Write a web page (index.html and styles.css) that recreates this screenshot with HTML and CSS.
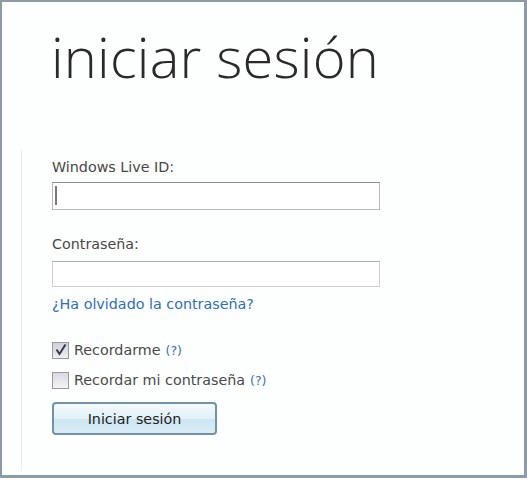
FILE: index.html
```html
<!DOCTYPE html>
<html lang="es">
<head>
<meta charset="utf-8">
<title>iniciar sesión</title>
<link rel="stylesheet" href="styles.css">
</head>
<body>
<div class="frame">
  <h1 class="title">iniciar sesión</h1>
  <form class="form">
    <label class="label">Windows Live ID:</label>
    <div class="input input-focus"><span class="caret"></span></div>
    <label class="label label-2">Contraseña:</label>
    <div class="input input-2"></div>
    <a class="link" href="#">¿Ha olvidado la contraseña?</a>
    <div class="check-row row-1">
      <span class="box checked">
        <svg viewBox="0 0 14 14" width="14" height="14"><path d="M2.5 6.5 L5.5 11 L11.5 1.5" fill="none" stroke="#3a3a48" stroke-width="2"/></svg>
      </span>
      <span class="check-text">Recordarme</span>
      <a class="help" href="#">(?)</a>
    </div>
    <div class="check-row row-2">
      <span class="box"></span>
      <span class="check-text">Recordar mi contraseña</span>
      <a class="help" href="#">(?)</a>
    </div>
    <button class="btn" type="button">Iniciar sesión</button>
  </form>
</div>
</body>
</html>
```
FILE: styles.css
```css
html, body {
  margin: 0;
  padding: 0;
  background: #ffffff;
}
.frame {
  box-sizing: border-box;
  width: 527px;
  height: 478px;
  border: 2px solid #8d9ba7;
  border-right-width: 3px;
  border-bottom-width: 3px;
  background: #fdfefe;
  display: flex;
  flex-direction: column;
}
.title {
  margin: 0;
  padding: 14px 0 0 49px;
  height: 128px;
  box-sizing: border-box;
  font-family: "Open Sans", sans-serif;
  font-weight: 300;
  font-size: 56px;
  line-height: 80px;
  color: #2a2a2a;
  letter-spacing: 0.2px;
}
.form {
  flex: 1;
  margin: 20px 0 4px 19px;
  border-left: 1px solid #ececec;
  padding: 9px 0 0 30px;
  display: flex;
  flex-direction: column;
  align-items: flex-start;
  font-family: "DejaVu Sans", sans-serif;
  font-size: 14.3px;
  color: #484848;
}
.label {
  line-height: 17px;
}
.label-2 {
  margin-top: 26px;
}
.input {
  box-sizing: border-box;
  width: 328px;
  height: 28px;
  margin-top: 6px;
  border: 1px solid #b9b9b9;
  border-top-color: #8e8e8e;
  background: #fff;
  padding: 3px 0 0 2px;
}
.input-2 {
  height: 26px;
  margin-top: 8px;
  border-color: #cfcfcf;
  border-top-color: #a9a9a9;
}
.caret {
  display: block;
  width: 2px;
  height: 19px;
  background: #7a7a7a;
}
.link {
  margin-top: 8px;
  color: #2f6fb9;
  text-decoration: none;
  line-height: 18px;
}
.check-row {
  display: flex;
  align-items: center;
  gap: 5px;
  height: 20px;
}
.row-1 {
  margin-top: 27px;
}
.row-2 {
  margin-top: 10px;
}
.box {
  box-sizing: border-box;
  width: 17px;
  height: 17px;
  border: 1px solid #9a9a9a;
  background: linear-gradient(#d9d9e2, #f4f4f6);
  display: flex;
  align-items: center;
  justify-content: center;
}
.box.checked {
  background: linear-gradient(#cfd0dc, #eeeef3);
}
.check-text {
  color: #4a4a4a;
}
.help {
  color: #3a70b5;
  text-decoration: none;
  font-size: 12.5px;
}
.btn {
  margin-top: 12px;
  width: 165px;
  height: 33px;
  border: 2px solid #7593a6;
  border-radius: 4px;
  background: linear-gradient(#f2fafd 0%, #e3f1f8 50%, #cde6f2 51%, #d9edf6 100%);
  font-family: "DejaVu Sans", sans-serif;
  font-size: 14.3px;
  color: #222;
  padding: 0;
}
```
